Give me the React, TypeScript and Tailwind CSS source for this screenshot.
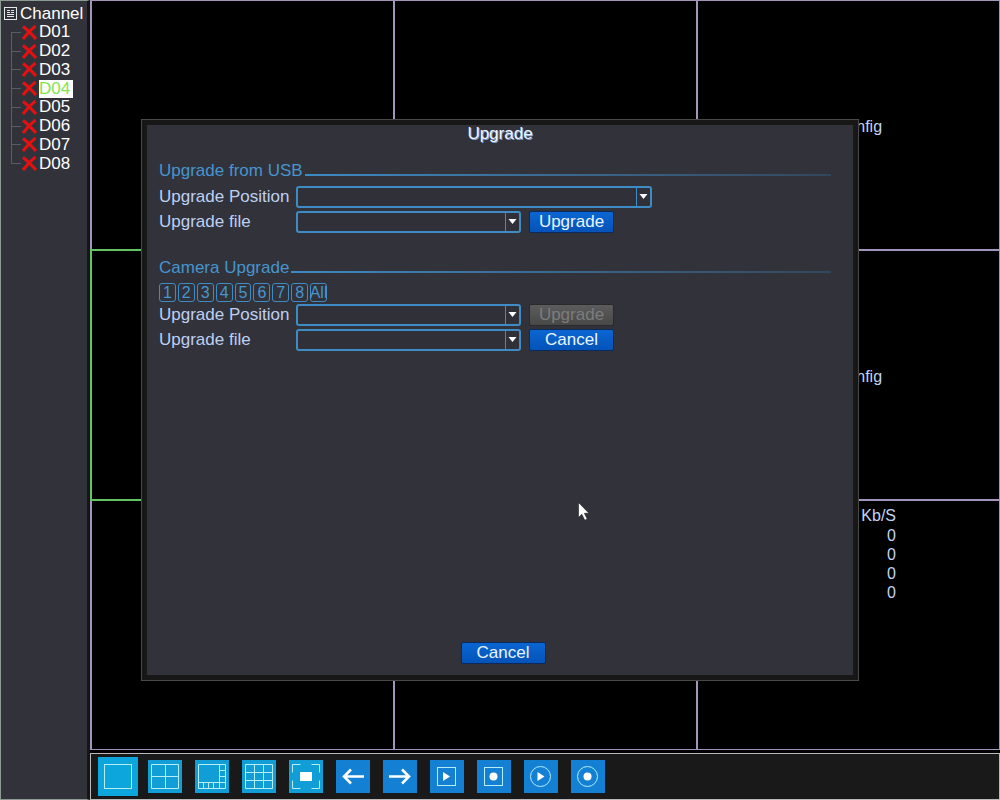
import clsx from 'clsx';
import { useState } from 'react';

const channels = ['D01', 'D02', 'D03', 'D04', 'D05', 'D06', 'D07', 'D08'];
const cameras = ['1', '2', '3', '4', '5', '6', '7', '8', 'All'];

// ── Sidebar ────────────────────────────────────────────────────────────────

function ChannelTree({ selected, onSelect }: { selected: string; onSelect: (c: string) => void }) {
  return (
    <aside className="w-[90px] shrink-0 border-y border-r-[3px] border-l border-y-[#8c9a94] border-r-[#151517] border-l-[#8c9a94] bg-[#32323a] pt-[3px] text-white">
      <div className="flex h-[19px] items-center gap-[3px] pl-[3px]">
        <svg viewBox="0 0 13 13" className="h-[13px] w-[13px] shrink-0" fill="none" stroke="#e4e8e8" shapeRendering="crispEdges">
          <rect x="0.5" y="0.5" width="12" height="12" />
          <path d="M3 3.5h3M3 5.5h3M7 3.5h3M7 5.5h3M3 7.5h7M3 9.5h7" />
        </svg>
        <span className="text-[17px] leading-[18px]">Channel</span>
      </div>
      <ul className="grid h-[150px] auto-rows-fr">
        {channels.map((c, i) => (
          <li key={c} className="flex items-center pl-[10px]">
            <span className="flex w-[10px] flex-col self-stretch">
              <span className={clsx('flex-1 border-b border-[#5c5c62]', i > 0 && 'border-l')} />
              <span className={clsx('flex-1 border-[#5c5c62]', i < channels.length - 1 && 'border-l')} />
            </span>
            <svg viewBox="0 0 15 15" className="ml-px h-[15px] w-[15px] shrink-0" stroke="#e31212" strokeWidth="3">
              <path d="M1 1.5C5 4.5 10 9.5 14 14M13.5 1C9 4.5 4.5 9.5 1 14" fill="none" />
            </svg>
            <button
              type="button"
              onClick={() => onSelect(c)}
              className={clsx(
                'ml-[2px] h-[18px] w-[34px] text-left text-[17px] leading-[18px]',
                c === selected && 'bg-white text-[#7fe650]'
              )}
            >
              {c}
            </button>
          </li>
        ))}
      </ul>
    </aside>
  );
}

// ── Video wall ─────────────────────────────────────────────────────────────

function VideoWall() {
  return (
    <div className="grid min-h-0 flex-1 grid-cols-3 grid-rows-3 gap-[2px] border border-l-2 border-[#a294ba] bg-[#a294ba] text-base text-[#c3d4f4]">
      {Array.from({ length: 9 }, (_, i) => (
        <div key={i} className={clsx('bg-black', i === 3 && 'ring-2 ring-[#5fc463]', i % 3 === 2 && 'flex justify-center', i % 3 === 2 && i < 8 && 'items-center pt-[3px] pr-[4px]')}>
          {(i === 2 || i === 5) && <span>No Config</span>}
          {i === 8 && (
            <table className="mt-[5px] mr-[103px] ml-auto self-start text-right leading-[19px]">
              <thead>
                <tr><th className="p-0 pb-px font-normal">Kb/S</th></tr>
              </thead>
              <tbody>
                {[0, 0, 0, 0].map((rate, n) => (
                  <tr key={n}><td className="p-0">{rate}</td></tr>
                ))}
              </tbody>
            </table>
          )}
        </div>
      ))}
    </div>
  );
}

// ── Toolbar ────────────────────────────────────────────────────────────────

const tools = [
  { label: 'Single view', art: <rect x="6.5" y="7.5" width="27" height="24" /> },
  { label: 'Four views', art: <path d="M3.5 4.5h27v24h-27zM17.5 4.5v24M3.5 16.5h27" /> },
  { label: 'Eight views', art: <path d="M3.5 4.5h27v24h-27zM3.5 22.5h27M24.5 4.5v24M24.5 10.5h6M24.5 16.5h6M8.5 22.5v6M13.5 22.5v6M18.5 22.5v6" /> },
  { label: 'Nine views', art: <path d="M3.5 4.5h27v24h-27zM12.5 4.5v24M21.5 4.5v24M3.5 12.5h27M3.5 20.5h27" /> },
  { label: 'Full screen', art: <><path d="M3.5 12.5v-8h8M22.5 4.5h8v8M30.5 20.5v8h-8M11.5 28.5h-8v-8" /><rect x="11" y="12" width="12" height="9" fill="white" stroke="none" /></> },
  { label: 'Previous', art: <path d="M28 16.5H8M15 9.5l-7 7 7 7" stroke="white" strokeWidth="2.6" /> },
  { label: 'Next', art: <path d="M6 16.5h20M19 9.5l7 7-7 7" stroke="white" strokeWidth="2.6" /> },
  { label: 'Play', art: <><rect x="7.5" y="7.5" width="18" height="18" /><path d="M13 12v9l7-4.5z" fill="white" stroke="none" /></> },
  { label: 'Record', art: <><rect x="7.5" y="7.5" width="18" height="18" /><circle cx="16.5" cy="16.5" r="4" fill="white" stroke="none" /></> },
  { label: 'Play all', art: <><circle cx="16.5" cy="16.5" r="10" /><path d="M13.5 12v9l7-4.5z" fill="white" stroke="none" /></> },
  { label: 'Record all', art: <><circle cx="16.5" cy="16.5" r="10" /><circle cx="16.5" cy="16.5" r="4" fill="white" stroke="none" /></> },
];

function Toolbar() {
  return (
    <div className="mt-[3px] flex h-[47px] shrink-0 items-center gap-[7px] border border-[#b9b9b9] bg-[#191919] pl-[7px]">
      {tools.map((t, i) => (
        <div key={t.label} className="flex w-[40px] shrink-0 justify-center">
          <button
            type="button"
            aria-label={t.label}
            className={clsx(
              i === 0 ? 'h-[39px] w-[40px] bg-[#0ca5dc]' : 'h-[33px] w-[34px]',
              i > 0 && i < 5 && 'bg-[#119ed6]',
              i >= 5 && 'bg-[#1480d3]'
            )}
          >
            <svg viewBox={i === 0 ? '0 0 40 39' : '0 0 34 33'} className="block h-full w-full" fill="none" stroke="#b4eef4" strokeWidth="1">
              {t.art}
            </svg>
          </button>
        </div>
      ))}
    </div>
  );
}

// ── Dialog parts ───────────────────────────────────────────────────────────

function SectionTitle({ children }: { children: React.ReactNode }) {
  return (
    <h2 className="flex h-[20px] items-center gap-[2px] leading-[20px] text-[#4795cf]">
      {children}
      <span className="mt-[7px] h-[2px] flex-1 bg-linear-to-r from-[#3d8ac4] to-[#33475c]" />
    </h2>
  );
}

function Field({ id, label, wide, children }: { id: string; label: string; wide?: boolean; children?: React.ReactNode }) {
  return (
    <div className="flex h-[22px] items-center">
      <label htmlFor={id} className="w-[137px] shrink-0 leading-[20px]">{label}</label>
      <div className={clsx('relative mr-[8px] h-[22px]', wide ? 'w-[356px]' : 'w-[225px]')}>
        <select id={id} className="block h-full w-full appearance-none rounded-[3px] border-2 border-[#3f8cc4] bg-[#303038] px-1 outline-none" />
        <span className="pointer-events-none absolute inset-y-[2px] right-[2px] flex w-[14px] justify-center border-l border-[#3f8cc4]">
          <svg viewBox="0 0 9 5" className="mt-[6px] h-[5px] w-[9px]" fill="white">
            <path d="M0.5 0h8L4.5 5z" />
          </svg>
        </span>
      </div>
      {children}
    </div>
  );
}

function Button({ children, disabled }: { children: React.ReactNode; disabled?: boolean }) {
  return (
    <button
      type="button"
      disabled={disabled}
      className={clsx(
        'h-[22px] w-[85px] rounded-[2px] border leading-[20px]',
        disabled
          ? 'border-[#2a2a2c] bg-linear-to-b from-[#5c5c5c] to-[#484848] text-[#7c7c7c]'
          : 'border-[#0b2a5c] bg-linear-to-b from-[#0b66d2] to-[#0453b8] text-[#eaf6ff]'
      )}
    >
      {children}
    </button>
  );
}

function UpgradeDialog() {
  return (
    <div className="fixed inset-0 flex items-center justify-center">
      <div role="dialog" aria-labelledby="dialog-title" className="w-[718px] max-w-full border border-[#4a4a48] bg-[#171717] p-[5px]">
        <div className="flex min-h-[550px] flex-col bg-[#32323a] pr-[22px] pb-[11px] pl-[12px] text-[17px] text-[#bdd0f2]">
          <h1 id="dialog-title" className="pl-[10px] text-center leading-[18px] text-[#eef4ff] [text-shadow:1px_1px_0_#7f9cd0]">Upgrade</h1>

          <section className="mt-[18px]">
            <SectionTitle>Upgrade from USB</SectionTitle>
            <div className="mt-[5px] space-y-[3px]">
              <Field id="usb-position" label="Upgrade Position" wide />
              <Field id="usb-file" label="Upgrade file">
                <Button>Upgrade</Button>
              </Field>
            </div>
          </section>

          <section className="mt-[25px]">
            <SectionTitle>Camera Upgrade</SectionTitle>
            <div className="mt-[5px] mb-[2px] grid w-[168px] grid-cols-9 gap-[2px]">
              {cameras.map(c => (
                <button
                  key={c}
                  type="button"
                  className="flex h-[19px] items-center justify-center rounded-[3px] border border-[#3f8cc4] text-base leading-[17px] text-[#4795cf]"
                >
                  {c}
                </button>
              ))}
            </div>
            <div className="space-y-[3px]">
              <Field id="camera-position" label="Upgrade Position">
                <Button disabled>Upgrade</Button>
              </Field>
              <Field id="camera-file" label="Upgrade file">
                <Button>Cancel</Button>
              </Field>
            </div>
          </section>

          <div className="mt-auto flex justify-center pl-[16px]">
            <Button>Cancel</Button>
          </div>
        </div>
      </div>
    </div>
  );
}

export default function App() {
  const [selected, setSelected] = useState('D04');

  return (
    <div className="flex h-screen overflow-hidden bg-black font-['Liberation_Sans',Arial,sans-serif]">
      <ChannelTree selected={selected} onSelect={setSelected} />
      <main className="flex min-w-0 flex-1 flex-col">
        <VideoWall />
        <Toolbar />
      </main>
      <UpgradeDialog />
      {/* Mouse pointer */}
      <svg viewBox="0 0 12 19" className="pointer-events-none fixed top-[502px] left-[578px] h-[19px] w-[12px]" fill="white" stroke="#1c1c20" strokeWidth="0.6">
        <path d="M0.5 0.5v15l3.3-3.200 3 6 2.400-1.200-2.800-5.800h4.600z" />
      </svg>
    </div>
  );
}
